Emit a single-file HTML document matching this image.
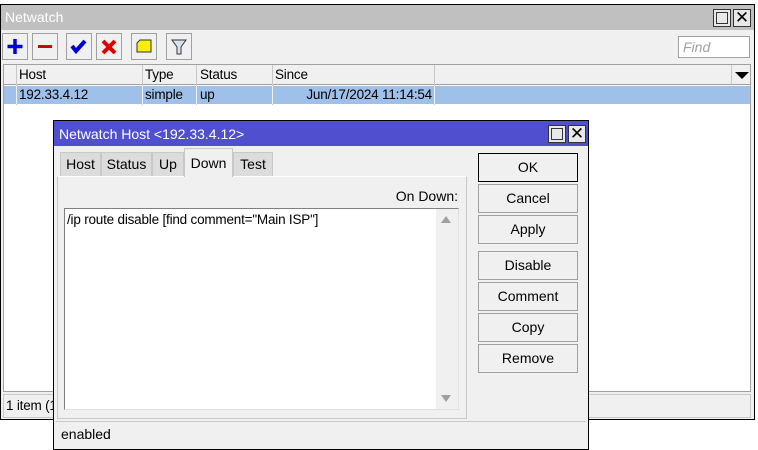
<!DOCTYPE html>
<html><head><style>
*{box-sizing:border-box;margin:0;padding:0}
body{width:758px;height:447px;background:#fff;position:relative;overflow:hidden;font-family:"Liberation Sans",Arial,sans-serif;font-size:13px;color:#000}
.a{position:absolute}
.tb{position:absolute;top:33px;width:26px;height:27px;border:1px solid #a0a0a0;background:#f0f0f0}
.btn{position:absolute;left:478px;width:100px;height:29px;border:1px solid #a0a0a0;background:#f0f0f0;text-align:center;line-height:27px;font-size:14px}
.tab{position:absolute;top:152px;height:24px;background:#dcdcdc;border:1px solid #c8c8c8;border-bottom:none;line-height:22px;text-align:center;font-size:14px}
.lt{font-size:13.5px;letter-spacing:-0.2px}
</style></head><body>
<div class="a" style="left:0;top:4px;width:755px;height:416px;border:1px solid #000;background:#f0f0f0"></div>
<div class="a" style="left:1px;top:5px;width:753px;height:25px;background:#c0c0c0;color:#fff;font-size:14px;line-height:25px;padding-left:4px">Netwatch</div>
<div class="a" style="left:713px;top:9px;width:18px;height:18px;border:1px solid #333;background:#e8e8e8"><div class="a" style="left:2px;top:2px;width:12px;height:12px;border:1px solid #333"></div></div>
<div class="a" style="left:733px;top:9px;width:18px;height:18px;border:1px solid #333;background:#e8e8e8;text-align:center;line-height:16px;font-size:17px">✕</div>
<div class="tb" style="left:2px"><svg width="24" height="25"><path d="M12 5v15M4.5 12.5h15" stroke="#0000d0" stroke-width="3.5"/></svg></div>
<div class="tb" style="left:32px"><svg width="24" height="25"><path d="M5 12.5h14" stroke="#d00000" stroke-width="3"/></svg></div>
<div class="tb" style="left:66px"><svg width="24" height="25"><path d="M5 12l4 5 9-10" stroke="#0000d0" stroke-width="4" fill="none"/></svg></div>
<div class="tb" style="left:96px"><svg width="24" height="25"><path d="M6 7l12 12M18 7L6 19" stroke="#e00000" stroke-width="4"/></svg></div>
<div class="tb" style="left:131px"><svg width="24" height="25"><path d="M5 9l3-3h11v12H5z" fill="#f8f000" stroke="#333"/></svg></div>
<div class="tb" style="left:166px"><svg width="24" height="25"><path d="M5 6h14l-5 7v7h-4v-7z" fill="#d8e4f0" stroke="#333"/></svg></div>
<div class="a" style="left:678px;top:36px;width:72px;height:22px;border:1px solid #a0a0a0;background:#fff;color:#a0a0a0;font-style:italic;font-size:14px;line-height:20px;padding-left:4px">Find</div>
<div class="a" style="left:3px;top:64px;width:748px;height:328px;background:#fff;border:1px solid #a0a0a0"></div>
<div class="a" style="left:4px;top:65px;width:746px;height:20px;background:#f0f0f0;border-bottom:1px solid #a0a0a0"></div>
<div class="a" style="left:16px;top:65px;width:1px;height:40px;background:#c8c8c8"></div>
<div class="a" style="left:142px;top:65px;width:1px;height:40px;background:#c8c8c8"></div>
<div class="a" style="left:196px;top:65px;width:1px;height:40px;background:#c8c8c8"></div>
<div class="a" style="left:272px;top:65px;width:1px;height:40px;background:#c8c8c8"></div>
<div class="a" style="left:434px;top:65px;width:1px;height:40px;background:#c8c8c8"></div>
<div class="a" style="left:731px;top:65px;width:1px;height:20px;background:#c8c8c8"></div>
<div class="a" style="left:735px;top:72px;width:0;height:0;border-left:7px solid transparent;border-right:7px solid transparent;border-top:7px solid #000"></div>
<div class="a lt" style="left:19px;top:67px">Host</div>
<div class="a lt" style="left:145px;top:67px">Type</div>
<div class="a lt" style="left:200px;top:67px">Status</div>
<div class="a lt" style="left:275px;top:67px">Since</div>
<div class="a" style="left:4px;top:86px;width:746px;height:18px;background:#9fc0e8"></div>
<div class="a" style="left:16px;top:86px;width:1px;height:18px;background:#f0f0f0"></div>
<div class="a" style="left:142px;top:86px;width:1px;height:18px;background:#f0f0f0"></div>
<div class="a" style="left:196px;top:86px;width:1px;height:18px;background:#f0f0f0"></div>
<div class="a" style="left:272px;top:86px;width:1px;height:18px;background:#f0f0f0"></div>
<div class="a" style="left:434px;top:86px;width:1px;height:18px;background:#f0f0f0"></div>
<div class="a lt" style="left:19px;top:87px">192.33.4.12</div>
<div class="a lt" style="left:145px;top:87px">simple</div>
<div class="a lt" style="left:200px;top:87px">up</div>
<div class="a lt" style="left:273px;top:87px;width:159px;text-align:right">Jun/17/2024 11:14:54</div>
<div class="a lt" style="left:3px;top:394px;width:748px;height:24px;border:1px solid #c8c8c8;line-height:22px;padding-left:2px">1 item (1</div>
<div class="a" style="left:53px;top:120px;width:536px;height:330px;border:1px solid #000;background:#f0f0f0"></div>
<div class="a" style="left:54px;top:121px;width:534px;height:25px;background:#4f4fcf;color:#fff;font-size:14px;line-height:26px;padding-left:5px">Netwatch Host &lt;192.33.4.12&gt;</div>
<div class="a" style="left:548px;top:125px;width:18px;height:18px;border:1px solid #333;background:#e8e8e8"><div class="a" style="left:2px;top:2px;width:12px;height:12px;border:1px solid #333"></div></div>
<div class="a" style="left:568px;top:125px;width:18px;height:18px;border:1px solid #333;background:#e8e8e8;text-align:center;line-height:16px;font-size:17px">✕</div>
<div class="a" style="left:57px;top:176px;width:410px;height:243px;border:1px solid #c8c8c8;border-top:1px solid #fff"></div>
<div class="tab" style="left:60px;width:41px">Host</div>
<div class="tab" style="left:101px;width:51px">Status</div>
<div class="tab" style="left:152px;width:32px">Up</div>
<div class="a" style="left:184px;top:148px;width:49px;height:29px;background:#f0f0f0;border:1px solid #c8c8c8;border-bottom:none;font-size:14px;text-align:center;line-height:28px">Down</div>
<div class="tab" style="left:233px;width:40px">Test</div>
<div class="a" style="left:300px;top:188px;width:158px;text-align:right;font-size:14px">On Down:</div>
<div class="a" style="left:64px;top:208px;width:395px;height:202px;background:#fff;border:1px solid #808080;border-right:1px solid #e0e0e0;border-bottom:1px solid #e0e0e0;font-size:13.5px;letter-spacing:-0.2px;padding:3px 0 0 2px">/ip route disable [find comment="Main ISP"]</div>
<div class="a" style="left:436px;top:209px;width:22px;height:200px;background:#f0f0f0"></div>
<div class="a" style="left:441px;top:216px;border-left:5px solid transparent;border-right:5px solid transparent;border-bottom:7px solid #a0a0a0"></div>
<div class="a" style="left:441px;top:395px;border-left:5px solid transparent;border-right:5px solid transparent;border-top:7px solid #a0a0a0"></div>
<div class="btn" style="top:153px;border-color:#000">OK</div>
<div class="btn" style="top:184px">Cancel</div>
<div class="btn" style="top:215px">Apply</div>
<div class="btn" style="top:251px">Disable</div>
<div class="btn" style="top:282px">Comment</div>
<div class="btn" style="top:313px">Copy</div>
<div class="btn" style="top:344px">Remove</div>
<div class="a" style="left:56px;top:421px;width:530px;height:26px;border-top:1px solid #c8c8c8;font-size:14px;line-height:24px;padding-left:5px">enabled</div>
</body></html>
